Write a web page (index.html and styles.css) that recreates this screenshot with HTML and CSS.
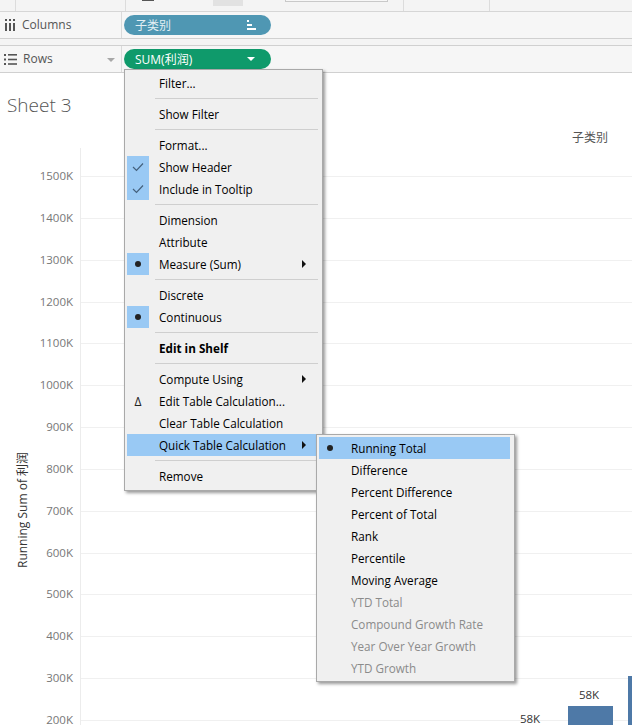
FILE: index.html
```html
<!DOCTYPE html>
<html>
<head>
<meta charset="utf-8">
<link rel="stylesheet" href="styles.css">
</head>
<body>
<div class="app">
  <div class="topstrip">
    <div class="ts-seg ts-a"></div>
    <div class="ts-seg ts-b"></div>
    <div class="ts-seg ts-c"><span class="ts-dash"></span><span class="ts-block"></span><span class="ts-box"></span></div>
    <div class="ts-seg ts-d"></div>
  </div>
  <div class="shelf">
    <div class="shelf-label">
      <svg class="shelf-icon" width="12" height="12" viewBox="0 0 12 12"><rect x="1" y="0" width="2" height="2" fill="#555"/><rect x="1" y="4" width="2" height="8" fill="#555"/><rect x="5" y="0" width="2" height="2" fill="#555"/><rect x="5" y="4" width="2" height="8" fill="#555"/><rect x="9" y="0" width="2" height="2" fill="#555"/><rect x="9" y="4" width="2" height="8" fill="#555"/></svg>
      <span>Columns</span>
    </div>
    <div class="shelf-body">
      <div class="pill pill-dim">
        <span>子类别</span>
        <svg class="sort-icon" width="10" height="10" viewBox="0 0 10 10"><rect x="0" y="0" width="2" height="2" fill="#fff"/><rect x="0" y="4" width="5" height="2" fill="#fff"/><rect x="0" y="8" width="9" height="2" fill="#fff"/></svg>
      </div>
    </div>
  </div>
  <div class="shelf-gap"></div>
  <div class="shelf">
    <div class="shelf-label">
      <svg class="shelf-icon" width="13" height="11" viewBox="0 0 13 11"><rect x="0" y="0" width="2" height="2" fill="#555"/><rect x="4" y="0" width="9" height="1.6" fill="#555"/><rect x="0" y="4.5" width="2" height="2" fill="#555"/><rect x="4" y="4.7" width="9" height="1.6" fill="#555"/><rect x="0" y="9" width="2" height="2" fill="#555"/><rect x="4" y="9.2" width="9" height="1.6" fill="#555"/></svg>
      <span>Rows</span>
      <span class="shelf-caret"></span>
    </div>
    <div class="shelf-body">
      <div class="pill pill-measure">
        <span>SUM(利润)</span>
        <span class="pill-caret"></span>
      </div>
    </div>
  </div>

  <div class="sheet">
    <div class="sheet-title">Sheet 3</div>
    <div class="col-header">子类别</div>
    <div class="chart">
      <div class="axis-title"><span>Running Sum of 利润</span></div>
      <div class="axis-labels">
        <div>1500K</div><div>1400K</div><div>1300K</div><div>1200K</div><div>1100K</div><div>1000K</div><div>900K</div><div>800K</div><div>700K</div><div>600K</div><div>500K</div><div>400K</div><div>300K</div><div>200K</div>
      </div>
      <div class="plot">
        <div class="grid-row"></div><div class="grid-row"></div><div class="grid-row"></div><div class="grid-row"></div><div class="grid-row"></div><div class="grid-row"></div><div class="grid-row"></div><div class="grid-row"></div><div class="grid-row"></div><div class="grid-row"></div><div class="grid-row"></div><div class="grid-row"></div><div class="grid-row"></div><div class="grid-row"></div>
        <div class="mark-label" style="left:438px; top:564px;">58K</div>
        <div class="mark-label" style="left:497px; top:540px;">58K</div>
        <div class="bar" style="left:487px; top:558px; width:45px;"></div>
        <div class="bar" style="left:547px; top:528px; width:45px;"></div>
      </div>
    </div>
  </div>

  <div class="menu">
    <div class="item"><span class="ic"></span><span class="tx">Filter...</span></div>
    <div class="sep"></div>
    <div class="item"><span class="ic"></span><span class="tx">Show Filter</span></div>
    <div class="sep"></div>
    <div class="item"><span class="ic"></span><span class="tx">Format...</span></div>
    <div class="item"><span class="ic on"><svg width="12" height="10" viewBox="0 0 12 10"><path d="M1 5 L4.5 8.5 L11 1.5" fill="none" stroke="#44607c" stroke-width="1.2"/></svg></span><span class="tx">Show Header</span></div>
    <div class="item"><span class="ic on"><svg width="12" height="10" viewBox="0 0 12 10"><path d="M1 5 L4.5 8.5 L11 1.5" fill="none" stroke="#44607c" stroke-width="1.2"/></svg></span><span class="tx">Include in Tooltip</span></div>
    <div class="sep"></div>
    <div class="item"><span class="ic"></span><span class="tx">Dimension</span></div>
    <div class="item"><span class="ic"></span><span class="tx">Attribute</span></div>
    <div class="item"><span class="ic on"><span class="dot"></span></span><span class="tx">Measure (Sum)</span><span class="arrow"></span></div>
    <div class="sep"></div>
    <div class="item"><span class="ic"></span><span class="tx">Discrete</span></div>
    <div class="item"><span class="ic on"><span class="dot"></span></span><span class="tx">Continuous</span></div>
    <div class="sep"></div>
    <div class="item"><span class="ic"></span><span class="tx bold">Edit in Shelf</span></div>
    <div class="sep"></div>
    <div class="item"><span class="ic"></span><span class="tx">Compute Using</span><span class="arrow"></span></div>
    <div class="item"><span class="ic delta">Δ</span><span class="tx">Edit Table Calculation...</span></div>
    <div class="item"><span class="ic"></span><span class="tx">Clear Table Calculation</span></div>
    <div class="item hl"><span class="ic"></span><span class="tx">Quick Table Calculation</span><span class="arrow"></span></div>
    <div class="sep"></div>
    <div class="item"><span class="ic"></span><span class="tx">Remove</span></div>
  </div>

  <div class="menu submenu">
    <div class="item hl"><span class="ic"><span class="dot"></span></span><span class="tx">Running Total</span></div>
    <div class="item"><span class="ic"></span><span class="tx">Difference</span></div>
    <div class="item"><span class="ic"></span><span class="tx">Percent Difference</span></div>
    <div class="item"><span class="ic"></span><span class="tx">Percent of Total</span></div>
    <div class="item"><span class="ic"></span><span class="tx">Rank</span></div>
    <div class="item"><span class="ic"></span><span class="tx">Percentile</span></div>
    <div class="item"><span class="ic"></span><span class="tx">Moving Average</span></div>
    <div class="item dis"><span class="ic"></span><span class="tx">YTD Total</span></div>
    <div class="item dis"><span class="ic"></span><span class="tx">Compound Growth Rate</span></div>
    <div class="item dis"><span class="ic"></span><span class="tx">Year Over Year Growth</span></div>
    <div class="item dis"><span class="ic"></span><span class="tx">YTD Growth</span></div>
  </div>
</div>
</body>
</html>
```
FILE: styles.css
```css
* { box-sizing: border-box; }
html, body { margin: 0; padding: 0; }
body {
  width: 632px;
  height: 725px;
  overflow: hidden;
  background: #fff;
  font-family: "Open Sans", "Noto Sans CJK SC", sans-serif;
}
.app { position: relative; width: 632px; height: 725px; overflow: hidden; }

/* top strip */
.topstrip {
  height: 12px;
  background: #f4f4f4;
  border-bottom: 1px solid #d6d6d6;
  display: flex;
}
.ts-seg { height: 11px; border-right: 1px solid #dcdcdc; position: relative; flex: none; }
.ts-a { width: 16px; }
.ts-b { width: 110px; }
.ts-c { width: 278px; }
.ts-d { width: 86px; }
.ts-dash { position: absolute; left: 16px; top: 0; width: 12px; height: 1px; background: #555; }
.ts-block { position: absolute; left: 87px; top: 0; width: 30px; height: 6px; background: #e2e2e2; }
.ts-box { position: absolute; left: 159px; top: 0; width: 103px; height: 2px; border: 1px solid #c9c9c9; border-top: none; background: #f7f7f7; }

/* shelves */
.shelf {
  display: flex;
  height: 27px;
  background: #f6f6f6;
  border-bottom: 1px solid #d0d0d0;
}
.shelf-gap { height: 7px; background: #f4f4f4; border-bottom: 1px solid #d0d0d0; }
.shelf-label {
  width: 122px;
  border-right: 1px solid #dadada;
  display: flex;
  align-items: center;
  padding-left: 4px;
  padding-bottom: 1px;
  font-size: 12px;
  color: #555;
  position: relative;
}
.shelf-icon { margin-right: 6px; flex: none; margin-top: 1px; }
.shelf-caret {
  position: absolute;
  left: 107px;
  top: 12px;
  width: 0; height: 0;
  border-left: 4px solid transparent;
  border-right: 4px solid transparent;
  border-top: 4px solid #a8a8a8;
}
.shelf-body { flex: 1; display: flex; align-items: center; padding-left: 2px; }
.pill {
  width: 147px;
  height: 20px;
  border-radius: 10px;
  display: flex;
  align-items: center;
  justify-content: space-between;
  padding: 0 16px 1px 11px;
  font-size: 12px;
  color: #fff;
}
.pill-dim { background: #4f97b3; color: #e3eff4; padding-right: 14px; }
.pill-measure { background: #0f9a6b; }
.pill-caret {
  width: 0; height: 0;
  border-left: 4px solid transparent;
  border-right: 4px solid transparent;
  border-top: 4px solid #fff;
}
.sort-icon { margin-top: 1px; }

/* sheet */
.sheet { position: relative; }
.sheet-title {
  margin-top: 19px;
  padding-left: 7px;
  height: 26px;
  line-height: 26px;
  font-size: 19px;
  font-weight: 300;
  color: #555;
  font-family: "Open Sans", sans-serif;
}
.col-header {
  margin-top: 10px;
  height: 20px;
  line-height: 20px;
  text-align: right;
  padding-right: 24px;
  font-size: 12px;
  color: #555;
}
.chart { display: flex; height: 600px; }
.axis-title {
  width: 33px;
  padding-top: 301px;
  padding-left: 10px;
  display: flex;
  justify-content: center;
}
.axis-title span {
  writing-mode: vertical-rl;
  text-orientation: sideways;
  transform: rotate(180deg);
  font-size: 12px;
  color: #333;
  white-space: nowrap;
  height: 122px;
  text-align: center;
}
.axis-labels {
  width: 47px;
  padding-top: 7px;
  padding-right: 7px;
}
.axis-labels div {
  height: 41.85px;
  line-height: 41.85px;
  text-align: right;
  font-size: 11.5px;
  color: #777;
}
.plot {
  flex: 1;
  position: relative;
  border-left: 1px solid #ececec;
  padding-top: 7px;
}
.grid-row { height: 41.85px; }
.grid-row::before {
  content: "";
  display: block;
  height: 21px;
  border-bottom: 1px solid #f0f0f0;
}
.bar { position: absolute; height: 200px; background: #4e79a7; }
.mark-label {
  position: absolute;
  width: 22px;
  text-align: center;
  font-size: 11.5px;
  line-height: 14px;
  color: #333;
}

/* menus */
.menu {
  position: absolute;
  left: 124px;
  top: 69px;
  width: 199px;
  background: #f0f0f0;
  border: 1px solid #a9a9a9;
  box-shadow: 2px 2px 3px rgba(0, 0, 0, 0.4);
  padding: 2px 4px 3px 2px;
  font-size: 11.7px;
  color: #000;
}
.submenu {
  left: 316px;
  top: 434px;
  width: 199px;
  padding-bottom: 2px;
}
.item {
  height: 22px;
  display: flex;
  align-items: center;
  position: relative;
}
.item.hl { background: #99c9f4; }
.item.dis { color: #8b8b8b; }
.ic {
  width: 22px;
  height: 22px;
  flex: none;
  display: flex;
  align-items: center;
  justify-content: center;
  margin-right: 10px;
}
.ic.on { background: #99c9f4; }
.delta { font-size: 12px; color: #222; }
.dot { width: 6px; height: 6px; border-radius: 50%; background: #222; }
.tx { flex: 1; white-space: nowrap; }
.bold { font-weight: 700; }
.arrow {
  position: absolute;
  right: 12px;
  top: 7px;
  width: 0; height: 0;
  border-top: 4px solid transparent;
  border-bottom: 4px solid transparent;
  border-left: 4px solid #111;
}
.sep {
  height: 9px;
  margin-left: 28px;
  display: flex;
  align-items: center;
}
.sep::before {
  content: "";
  flex: 1;
  height: 1px;
  background: #cfcfcf;
}
```
